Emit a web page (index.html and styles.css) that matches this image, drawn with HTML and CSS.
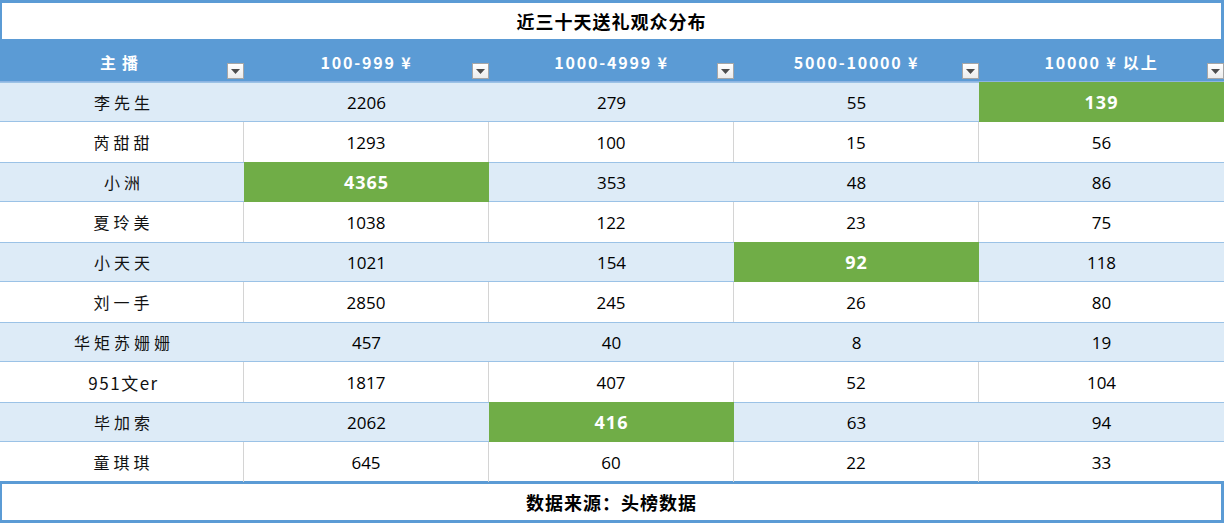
FILE: index.html
```html
<!DOCTYPE html>
<html lang="zh">
<head>
<meta charset="utf-8">
<link rel="stylesheet" href="styles.css">
</head>
<body>
<div class="sheet">
  <div class="title">近三十天送礼观众分布</div>
  <div class="row head">
    <div class="cell"><span class="hname">主播</span><span class="filter"><svg width="9" height="5" viewBox="0 0 9 5"><path d="M0 0H9L4.5 5Z" fill="#4d4d4d"/></svg></span></div>
    <div class="cell"><span class="htxt">100-999 ¥</span><span class="filter"><svg width="9" height="5" viewBox="0 0 9 5"><path d="M0 0H9L4.5 5Z" fill="#4d4d4d"/></svg></span></div>
    <div class="cell"><span class="htxt">1000-4999 ¥</span><span class="filter"><svg width="9" height="5" viewBox="0 0 9 5"><path d="M0 0H9L4.5 5Z" fill="#4d4d4d"/></svg></span></div>
    <div class="cell"><span class="htxt">5000-10000 ¥</span><span class="filter"><svg width="9" height="5" viewBox="0 0 9 5"><path d="M0 0H9L4.5 5Z" fill="#4d4d4d"/></svg></span></div>
    <div class="cell"><span class="htxt">10000 ¥ 以上</span><span class="filter"><svg width="9" height="5" viewBox="0 0 9 5"><path d="M0 0H9L4.5 5Z" fill="#4d4d4d"/></svg></span></div>
  </div>
  <div class="row band">
    <div class="cell name">李先生</div><div class="cell">2206</div><div class="cell">279</div><div class="cell">55</div><div class="cell hi">139</div>
  </div>
  <div class="row plain">
    <div class="cell name">芮甜甜</div><div class="cell">1293</div><div class="cell">100</div><div class="cell">15</div><div class="cell">56</div>
  </div>
  <div class="row band">
    <div class="cell name">小洲</div><div class="cell hi">4365</div><div class="cell">353</div><div class="cell">48</div><div class="cell">86</div>
  </div>
  <div class="row plain">
    <div class="cell name">夏玲美</div><div class="cell">1038</div><div class="cell">122</div><div class="cell">23</div><div class="cell">75</div>
  </div>
  <div class="row band">
    <div class="cell name">小天天</div><div class="cell">1021</div><div class="cell">154</div><div class="cell hi">92</div><div class="cell">118</div>
  </div>
  <div class="row plain">
    <div class="cell name">刘一手</div><div class="cell">2850</div><div class="cell">245</div><div class="cell">26</div><div class="cell">80</div>
  </div>
  <div class="row band">
    <div class="cell name">华矩苏姗姗</div><div class="cell">457</div><div class="cell">40</div><div class="cell">8</div><div class="cell">19</div>
  </div>
  <div class="row plain">
    <div class="cell name mixed">951文er</div><div class="cell">1817</div><div class="cell">407</div><div class="cell">52</div><div class="cell">104</div>
  </div>
  <div class="row band">
    <div class="cell name">毕加索</div><div class="cell">2062</div><div class="cell hi">416</div><div class="cell">63</div><div class="cell">94</div>
  </div>
  <div class="row plain">
    <div class="cell name">童琪琪</div><div class="cell">645</div><div class="cell">60</div><div class="cell">22</div><div class="cell">33</div>
  </div>
  <div class="foot">数据来源：头榜数据</div>
</div>
</body>
</html>
```

FILE: styles.css
```css
html, body {
  margin: 0;
  padding: 0;
  background: #ffffff;
}
body {
  width: 1226px;
  height: 525px;
  overflow: hidden;
  font-family: "Open Sans", "Noto Sans CJK SC", sans-serif;
}
.sheet {
  width: 1224px;
  display: flex;
  flex-direction: column;
}
.title, .foot {
  box-sizing: border-box;
  height: 42px;
  border: 3px solid #5b9bd5;
  border-left-width: 2px;
  display: flex;
  align-items: center;
  justify-content: center;
  font-family: "Noto Sans CJK SC", sans-serif;
  font-weight: 700;
  font-size: 18px;
  color: #000;
  letter-spacing: 1px;
}
.foot {
  height: 42px;
  margin-top: -1px;
}
.row {
  display: grid;
  grid-template-columns: 244px 245px 245px 245px 245px;
  height: 40px;
  box-sizing: border-box;
}
.cell {
  box-sizing: border-box;
  display: flex;
  align-items: center;
  justify-content: center;
  font-size: 17px;
  color: #000;
  position: relative;
}
.head {
  background: #5b9bd5;
  border-bottom: 1px solid #8db4e2;
}
.head .cell {
  color: #fff;
  font-family: "Noto Sans CJK SC", sans-serif;
  font-weight: 700;
  font-size: 16px;
  letter-spacing: 1.8px;
}
.head .hname {
  letter-spacing: 6px;
  font-weight: 700;
}
.filter {
  position: absolute;
  right: 0;
  bottom: 2px;
  width: 17px;
  height: 16px;
  box-sizing: border-box;
  border: 1px solid #a6a6a6;
  background: linear-gradient(#ffffff, #ececec);
  display: flex;
  align-items: center;
  justify-content: center;
}
.band {
  background: #ddebf7;
  border-top: 1px solid #9bc2e6;
  border-bottom: 1px solid #9bc2e6;
}
.plain .cell {
  border-right: 1px solid #d4d4d4;
}
.plain .cell:last-child {
  border-right: none;
}
.name {
  font-family: "Noto Sans CJK SC", sans-serif;
  font-size: 16px;
  letter-spacing: 4px;
  padding-left: 4px;
  color: #111;
}
.name.mixed {
  letter-spacing: 1.5px;
  font-size: 17px;
}
.hi {
  background: #70ad47;
  color: #fff;
  font-weight: 700;
  font-size: 18px;
  letter-spacing: 1px;
}
.band .hi {
  margin: -1px 0;
}
```
